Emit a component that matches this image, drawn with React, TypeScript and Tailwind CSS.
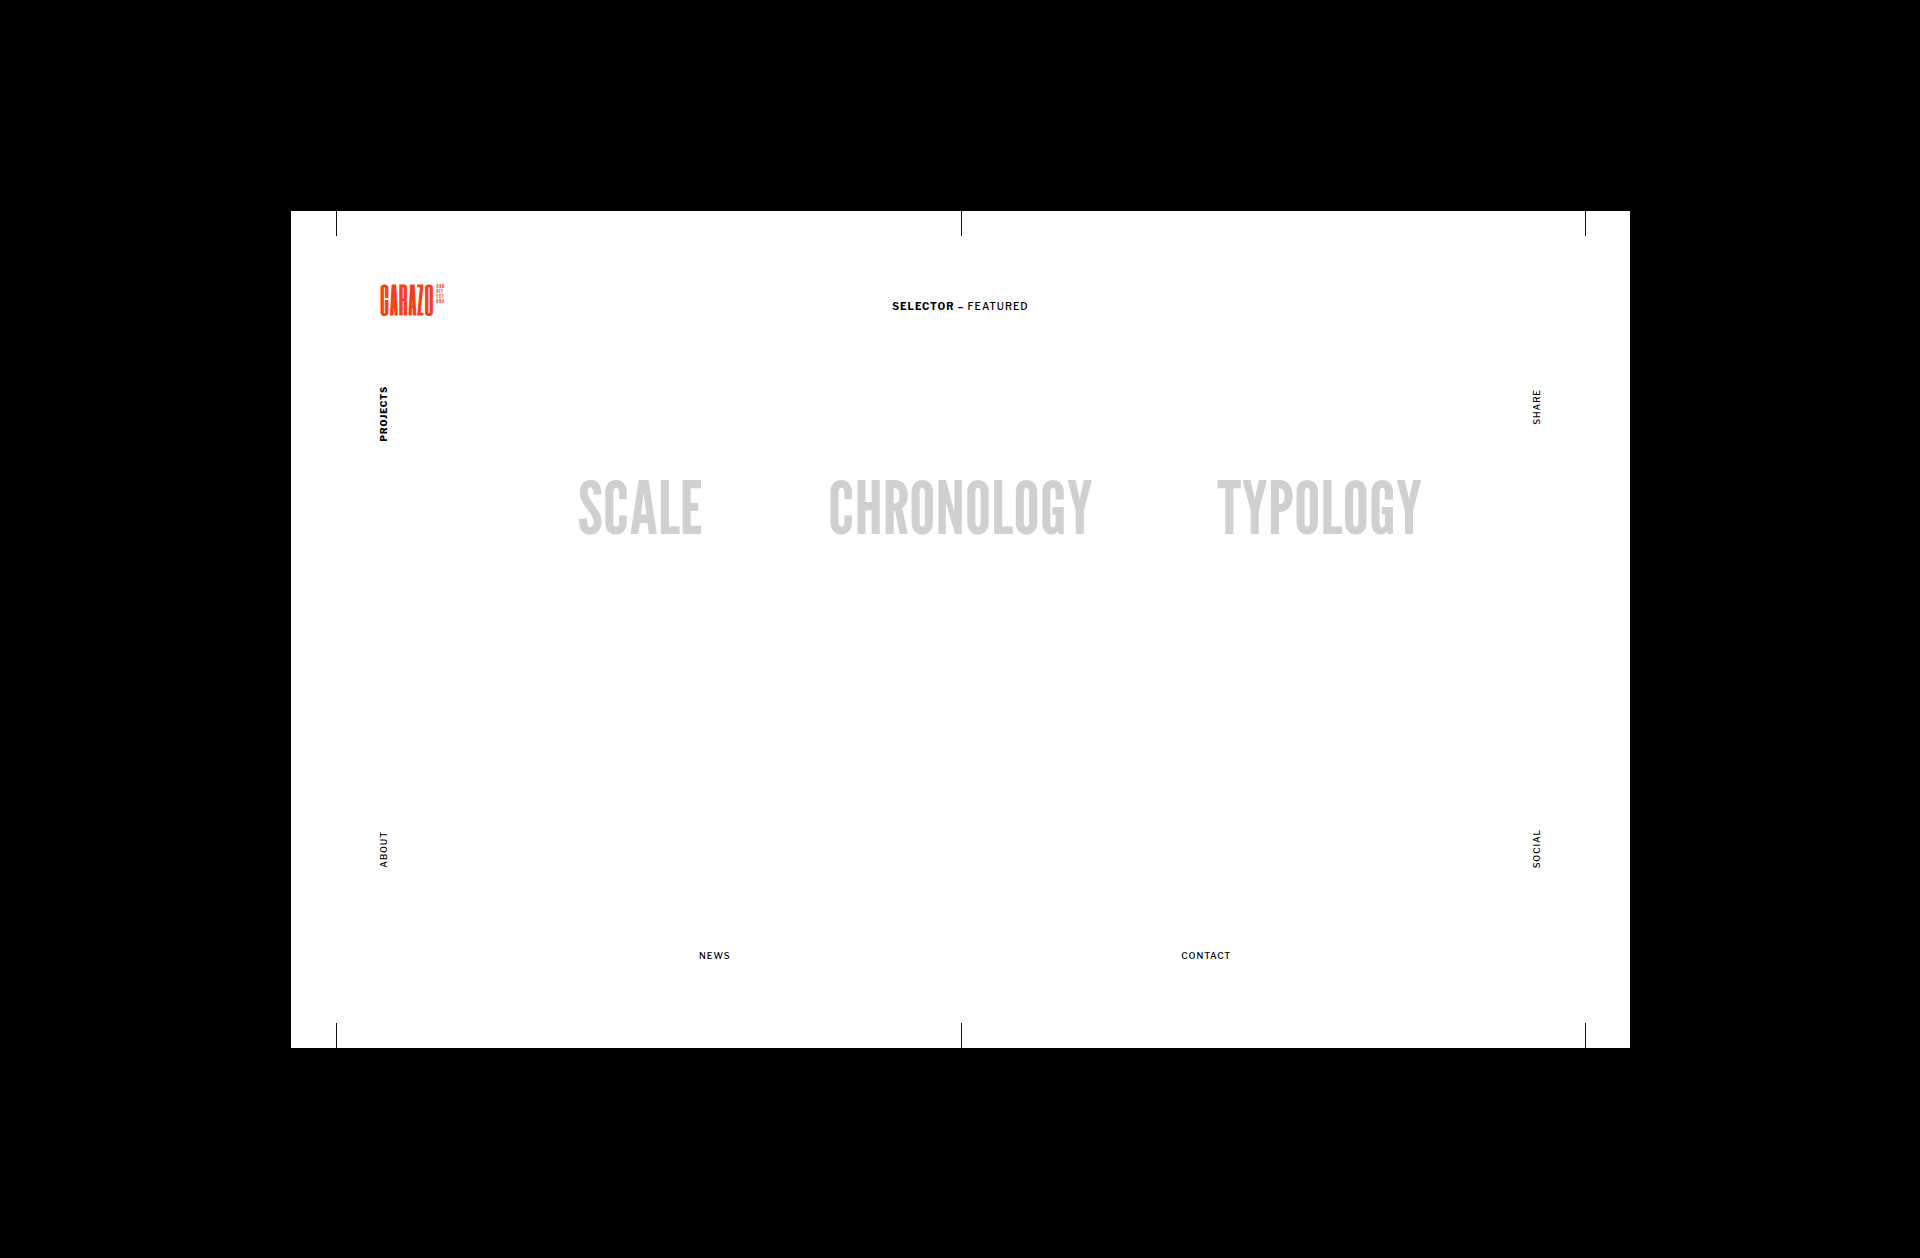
const sections = ["SCALE", "CHRONOLOGY", "TYPOLOGY"];

function CropMarks() {
  return (
    <div aria-hidden="true" className="flex h-[25px] justify-between pr-11 pl-[45px]">
      <span className="w-px bg-[#111111]" />
      <span className="w-px bg-[#111111]" />
      <span className="w-px bg-[#111111]" />
    </div>
  );
}

function SideLink({ label, bold = false }: { label: string; bold?: boolean }) {
  return (
    <a
      href="#"
      className={
        bold
          ? "rotate-180 leading-3 font-extrabold text-black [writing-mode:vertical-rl]"
          : "rotate-180 leading-3 font-medium [writing-mode:vertical-rl]"
      }
    >
      {label}
    </a>
  );
}

function Logo() {
  return (
    <a href="#" className="flex h-8 items-start gap-0.5 text-[#f84018]">
      <span className="font-['Six_Caps','League_Gothic',sans-serif] text-[36px] leading-8 font-bold tracking-wide">CARAZO</span>
      <span className="flex flex-col font-['League_Gothic',sans-serif] text-[6px] leading-[5px] tracking-widest">
        <span>ARQ</span>
        <span>UIT</span>
        <span>ECT</span>
        <span>URA</span>
      </span>
    </a>
  );
}

export default function App() {
  return (
    <div className="flex min-h-screen flex-col bg-black pt-[211px] pr-[290px] pb-[210px] pl-[291px]">
      <div className="flex flex-1 flex-col bg-white font-['Libre_Franklin','Liberation_Sans',sans-serif] text-[9px] tracking-widest text-black">
        <CropMarks />

        <header className="grid grid-cols-3 px-[89px] pt-[47px]">
          <Logo />
          <button type="button" className="mt-[17px] justify-self-center self-start text-[10px] leading-3 tracking-widest">
            <strong className="font-bold">SELECTOR –</strong> <span className="font-medium">FEATURED</span>
          </button>
        </header>

        <div className="flex flex-1 justify-between px-[87px] pt-[71px] pb-12">
          <nav aria-label="Main" className="flex flex-col justify-between pb-[34px]">
            <SideLink label="PROJECTS" bold />
            <SideLink label="ABOUT" />
          </nav>
          <main className="flex items-start gap-[124px] pt-[86px] pl-[79px]">
            {sections.map((name) => (
              <h2 key={name} className="font-['League_Gothic',sans-serif] text-[74px] leading-[70px] font-normal tracking-normal text-[#d0d0d2]">
                <a href="#">{name}</a>
              </h2>
            ))}
          </main>
          <nav aria-label="Connect" className="flex flex-col justify-between pt-[3px] pb-[34px]">
            <SideLink label="SHARE" />
            <SideLink label="SOCIAL" />
          </nav>
        </div>

        <footer className="grid grid-cols-2 justify-items-center px-[178px] pb-[61px] leading-3 font-medium">
          <a href="#">NEWS</a>
          <a href="#">CONTACT</a>
        </footer>

        <CropMarks />
      </div>
    </div>
  );
}
